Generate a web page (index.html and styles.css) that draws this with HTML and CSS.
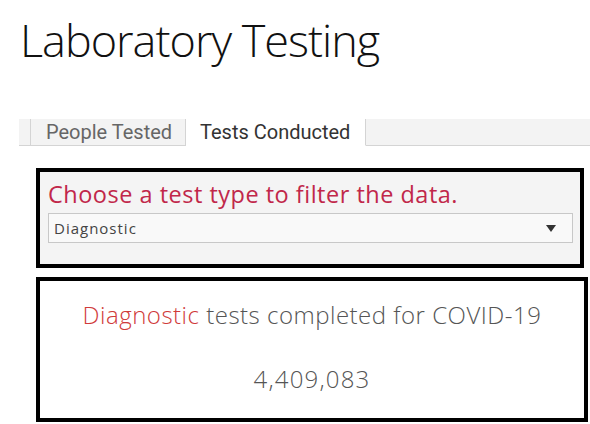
FILE: index.html
```html
<!DOCTYPE html>
<html>
<head>
<meta charset="utf-8">
<link rel="stylesheet" href="styles.css">
</head>
<body>
<div class="page">
  <h1 class="title">Laboratory Testing</h1>
  <div class="tabs">
    <div class="tab-spacer"></div>
    <div class="tab">People Tested</div>
    <div class="tab active">Tests Conducted</div>
    <div class="tab-fill"></div>
  </div>
  <div class="filter">
    <div class="filter-label">Choose a test type to filter the data.</div>
    <div class="select">
      <span class="select-value">Diagnostic</span>
      <svg class="caret" width="10" height="7" viewBox="0 0 10 7"><path d="M0 0 L10 0 L5 7 Z" fill="#333"/></svg>
    </div>
  </div>
  <div class="summary">
    <div class="summary-line"><span class="hl">Diagnostic</span> tests completed for COVID-19</div>
    <div class="summary-number">4,409,083</div>
  </div>
</div>
</body>
</html>
```
FILE: styles.css
```css
html, body {
  margin: 0;
  padding: 0;
  background: #fff;
}
.page {
  width: 590px;
  height: 424px;
  overflow: hidden;
}
.title {
  margin: 0;
  padding: 10px 0 0 20px;
  height: 109px;
  box-sizing: border-box;
  font-family: "Open Sans", sans-serif;
  font-weight: 300;
  font-size: 45px;
  line-height: 60px;
  color: #111;
  letter-spacing: -1px;
}
.tabs {
  display: flex;
  margin-left: 19px;
  margin-top: 10px;
  height: 27px;
  font-family: Roboto, sans-serif;
  font-size: 20px;
}
.tab-spacer {
  width: 11px;
  background: #f3f3f3;
  border-right: 1px solid #d4d4d4;
  border-bottom: 1px solid #d4d4d4;
}
.tab {
  padding: 0 0 0 15px;
  width: 139px;
  line-height: 26px;
  background: #f3f3f3;
  color: #666;
  border-right: 1px solid #d4d4d4;
  border-bottom: 1px solid #d4d4d4;
}
.tab.active {
  width: 165px;
  padding-left: 14px;
  background: #fff;
  color: #333;
  border-bottom: 1px solid #fff;
}
.tab-fill {
  flex: 1;
  background: #f3f3f3;
  border-bottom: 1px solid #d4d4d4;
}
.filter {
  margin: 22px 0 0 36px;
  width: 548px;
  height: 100px;
  box-sizing: border-box;
  border: 4px solid #000;
  background: #f4f4f4;
  padding: 8px 0 0 8px;
}
.filter-label {
  font-family: "Open Sans", sans-serif;
  font-size: 23.5px;
  line-height: 28px;
  letter-spacing: 0.5px;
  color: #c1274a;
}
.select {
  margin-top: 5px;
  width: 525px;
  height: 30px;
  box-sizing: border-box;
  border: 1px solid #c8c8c8;
  background: #f9f9f9;
  display: flex;
  align-items: center;
  justify-content: space-between;
  padding: 0 16px 0 5px;
}
.select-value {
  font-family: "Open Sans", sans-serif;
  font-size: 15px;
  color: #444;
  letter-spacing: 1px;
}
.caret {
  display: block;
}
.summary {
  margin: 9px 0 0 36px;
  width: 552px;
  height: 145px;
  box-sizing: border-box;
  border: 4px solid #000;
  background: #fff;
  text-align: center;
  font-family: "Open Sans", sans-serif;
  font-weight: 300;
  color: #555;
  padding-top: 19px;
}
.summary-line {
  font-size: 24px;
  line-height: 30px;
  letter-spacing: 0.5px;
}
.hl {
  color: #d03a3a;
}
.summary-number {
  margin-top: 34px;
  font-size: 24px;
  line-height: 30px;
  letter-spacing: 1.2px;
}
```
